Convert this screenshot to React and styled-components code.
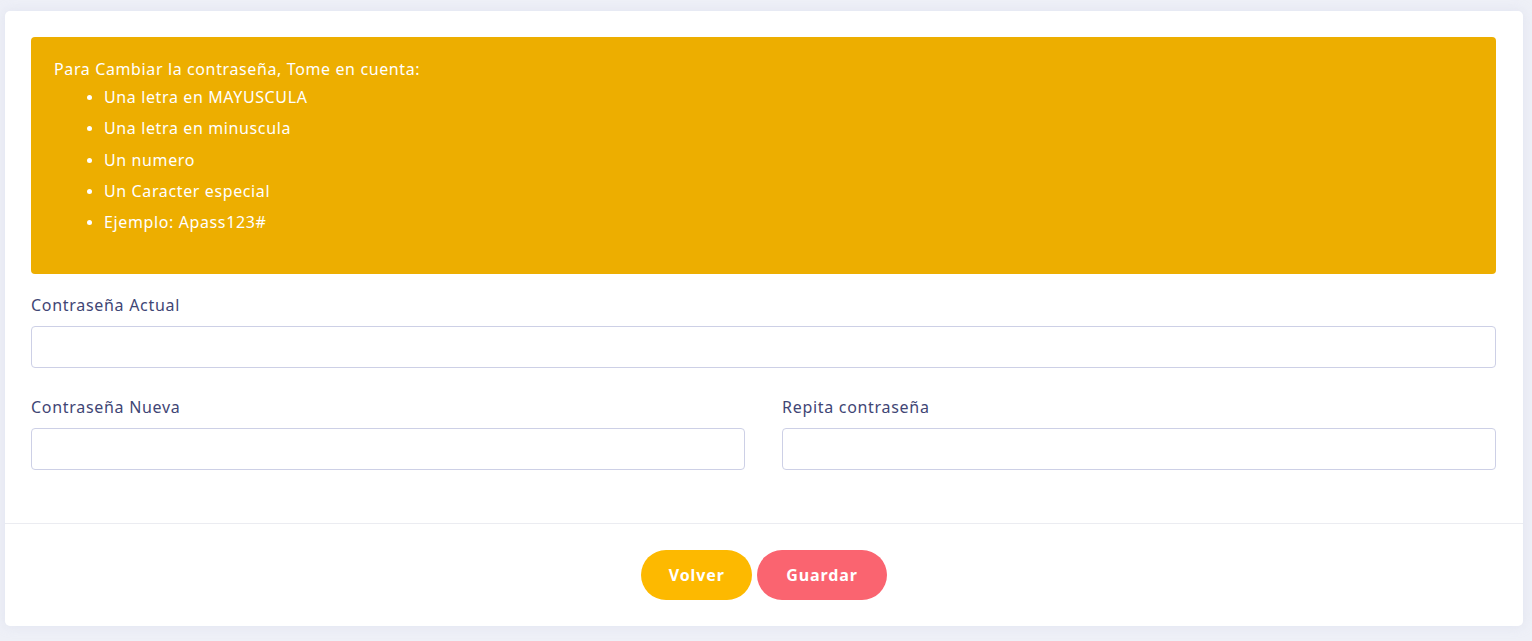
import React from "react";
import styled, { createGlobalStyle } from "styled-components";

const Global = createGlobalStyle`
  html, body { margin: 0; padding: 0; }
  body {
    background: #eef0f7;
    font-family: "Noto Sans", "Lato", sans-serif;
  }
`;

const Page = styled.div`
  padding: 11px 9px 15px 5px;
`;

const Card = styled.div`
  background: #ffffff;
  border-radius: 5px;
  box-shadow: 0 0 12px rgba(200, 203, 225, 0.35);
`;

const CardBody = styled.div`
  padding: 26px 27px 25px 26px;
`;

const Alert = styled.div`
  background: #edae00;
  color: #ffffff;
  border-radius: 4px;
  padding: 21px 23px 32px 23px;
  font-size: 16px;
  line-height: 22px;
  letter-spacing: 0.62px;
  margin-bottom: 20px;
`;

const AlertTitle = styled.div`
  margin-bottom: 6px;
`;

const List = styled.ul`
  margin: 0;
  padding-left: 50px;
  li {
    line-height: 22px;
    margin-bottom: 9.3px;
  }
  li::marker { font-size: 14px; }
`;

const Group = styled.div`
  margin-bottom: 28px;
  display: flex;
  flex-direction: column;
`;

const Label = styled.label`
  color: #3f4675;
  font-size: 16px;
  line-height: 22px;
  letter-spacing: 0.7px;
  margin-bottom: 10px;
`;

const Input = styled.input`
  box-sizing: border-box;
  height: 42px;
  width: 100%;
  border: 1px solid #cdd0e6;
  border-radius: 4px;
  background: #fff;
  outline: none;
  padding: 0 12px;
  font-family: inherit;
  font-size: 15px;
`;

const Row = styled.div`
  display: grid;
  grid-template-columns: 1fr 1fr;
  column-gap: 37px;
`;

const Footer = styled.div`
  border-top: 1px solid #ebecf1;
  padding: 26px 26px 26px 26px;
  display: flex;
  justify-content: center;
  gap: 5px;
`;

const Button = styled.button`
  height: 50px;
  padding: 0 ${(p) => p.$px}px;
  border: none;
  border-radius: 25px;
  background: ${(p) => p.$bg};
  color: #fff;
  font-family: inherit;
  font-weight: 700;
  font-size: 16px;
  letter-spacing: 0.9px;
  cursor: pointer;
`;

export default function App() {
  return (
    <>
      <Global />
      <Page>
        <Card>
          <CardBody>
            <Alert>
              <AlertTitle>Para Cambiar la contraseña, Tome en cuenta:</AlertTitle>
              <List>
                <li>Una letra en MAYUSCULA</li>
                <li>Una letra en minuscula</li>
                <li>Un numero</li>
                <li>Un Caracter especial</li>
                <li>Ejemplo: Apass123#</li>
              </List>
            </Alert>
            <Group>
              <Label>Contraseña Actual</Label>
              <Input type="password" />
            </Group>
            <Row>
              <Group>
                <Label>Contraseña Nueva</Label>
                <Input type="password" />
              </Group>
              <Group>
                <Label>Repita contraseña</Label>
                <Input type="password" />
              </Group>
            </Row>
          </CardBody>
          <Footer>
            <Button $bg="#fdb900" $px={27.5}>Volver</Button>
            <Button $bg="#fa6470" $px={29}>Guardar</Button>
          </Footer>
        </Card>
      </Page>
    </>
  );
}
